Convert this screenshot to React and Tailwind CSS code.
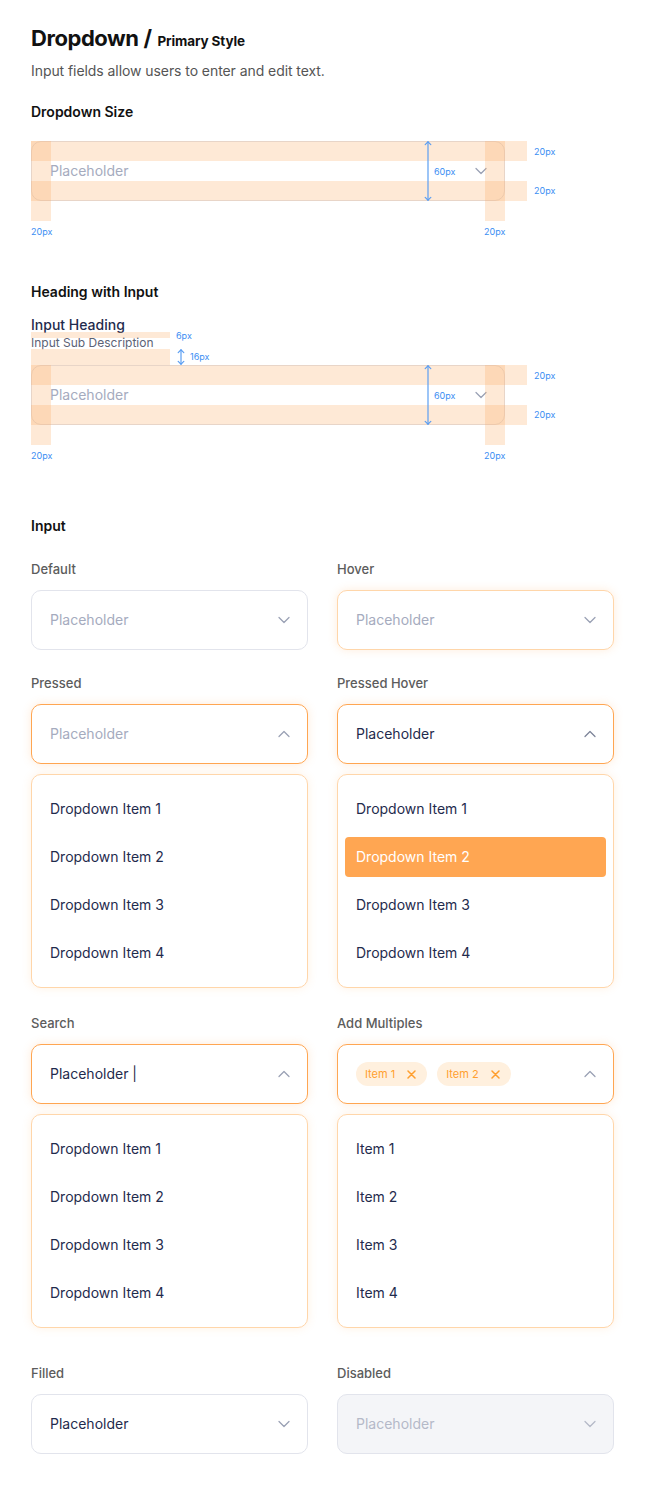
import React from 'react';
import { ChevronDown, ChevronUp } from 'lucide-react';

const items = ['Dropdown Item 1', 'Dropdown Item 2', 'Dropdown Item 3', 'Dropdown Item 4'];

function Arrow({ h }) {
  return (
    <svg width="8" height={h} viewBox={`0 0 8 ${h}`} fill="none" stroke="#5b9ef2" strokeWidth="1.2" strokeLinecap="round">
      <path d={`M4 0.8V${h - 0.8}`} />
      <path d="M1.2 3.6L4 0.8L6.8 3.6" />
      <path d={`M1.2 ${h - 3.6}L4 ${h - 0.8}L6.8 ${h - 3.6}`} />
    </svg>
  );
}

function SizeSpec() {
  return (
    <div className="relative h-[96px] w-[540px]">
      <div className="flex h-[60px] w-[474px] items-center justify-between rounded-[10px] border border-[#e2e4ec] bg-white pl-[18px] pr-[13px]">
        <span className="text-sm text-[#a5abbe]">Placeholder</span>
        <ChevronDown size={20} strokeWidth={1.5} className="text-[#9aa1b5]" />
      </div>
      {/* padding guides */}
      <div className="absolute left-0 top-0 h-5 w-[496px] bg-[#fda65d]/25" />
      <div className="absolute left-0 top-10 h-5 w-[496px] bg-[#fda65d]/25" />
      <div className="absolute left-0 top-0 h-20 w-5 bg-[#fda65d]/25" />
      <div className="absolute left-[454px] top-0 h-20 w-5 bg-[#fda65d]/25" />
      <div className="absolute left-[393px] top-0">
        <Arrow h={60} />
      </div>
      <span className="absolute left-[403px] top-[25px] text-[9px] leading-[11px] text-[#3b8ef3]">60px</span>
      <span className="absolute left-[503px] top-[5px] text-[9px] leading-[11px] text-[#3b8ef3]">20px</span>
      <span className="absolute left-[503px] top-[44px] text-[9px] leading-[11px] text-[#3b8ef3]">20px</span>
      <span className="absolute left-0 top-[85px] text-[9px] leading-[11px] text-[#3b8ef3]">20px</span>
      <span className="absolute left-[453px] top-[85px] text-[9px] leading-[11px] text-[#3b8ef3]">20px</span>
    </div>
  );
}

function Label({ children }) {
  return <div className="text-[13px] font-medium leading-4 text-[#5c5c5c]">{children}</div>;
}

function Menu({ list, active }) {
  return (
    <div className="mt-[10px] rounded-[10px] border border-[#ffd6aa] bg-white px-[7px] py-[10px] shadow-[0_0_10px_rgba(255,165,82,0.16)]">
      {list.map((item, i) => (
        <div key={item} className="flex h-12 items-center">
          <div
            className={`flex h-10 w-full items-center rounded-[4px] px-[11px] text-sm ${
              i === active ? 'bg-[#ffa652] text-white' : 'text-[#1f2b4d]'
            }`}
          >
            {item}
          </div>
        </div>
      ))}
    </div>
  );
}

function Chip({ children }) {
  return (
    <span className="flex h-6 items-center gap-3 rounded-full bg-[#fff0de] pl-[9px] pr-[11px] text-[11px] text-[#ff9f2e]">
      {children}
      <svg width="9" height="9" viewBox="0 0 9 9" fill="none" stroke="#ff9f2e" strokeWidth="1.5" strokeLinecap="round">
        <path d="M1 1L8 8M8 1L1 8" />
      </svg>
    </span>
  );
}

export default function App() {
  return (
    <div className="min-h-[1504px] bg-white pb-[50px] pl-[31px] pr-[31px] pt-[22px] font-['Inter',sans-serif] text-[#111]">
      <div className="flex items-baseline gap-[6px]">
        <h1 className="text-[22px] font-bold leading-8 tracking-[-0.02em]">Dropdown /</h1>
        <span className="text-[13.5px] font-bold tracking-[-0.01em]">Primary Style</span>
      </div>
      <p className="mt-[7px] text-sm leading-5 tracking-[-0.005em] text-[#555]">Input fields allow users to enter and edit text.</p>

      <h2 className="mt-[21px] text-sm font-semibold leading-5">Dropdown Size</h2>
      <div className="mt-[19px]">
        <SizeSpec />
      </div>

      <h2 className="mt-[45px] text-sm font-semibold leading-5">Heading with Input</h2>
      <div className="relative mt-[15px]">
        <div className="text-sm font-medium leading-4 text-[#1f2b4d]">Input Heading</div>
        <div className="mt-[2px] text-xs leading-[15px] text-[#5c6275]">Input Sub Description</div>
        <div className="absolute left-0 top-[15px] h-[6px] w-[139px] bg-[#fda65d]/25" />
        <div className="absolute left-0 top-[32px] h-4 w-[139px] bg-[#fda65d]/25" />
        <span className="absolute left-[145px] top-[13px] text-[9px] leading-[11px] text-[#3b8ef3]">6px</span>
        <div className="absolute left-[146px] top-[32px]">
          <Arrow h={16} />
        </div>
        <span className="absolute left-[159px] top-[34px] text-[9px] leading-[11px] text-[#3b8ef3]">16px</span>
        <div className="mt-[15px]">
          <SizeSpec />
        </div>
      </div>

      <h2 className="mt-[55px] text-sm font-semibold leading-5">Input</h2>

      <div className="mt-[25px] grid grid-cols-2 gap-x-[29px]">
        <div>
          <Label>Default</Label>
          <div className="mt-[13px] flex h-[60px] items-center justify-between rounded-[10px] border border-[#e2e4ec] bg-white pl-[18px] pr-[13px]">
            <span className="text-sm text-[#a5abbe]">Placeholder</span>
            <ChevronDown size={20} strokeWidth={1.5} className="text-[#9aa1b5]" />
          </div>
        </div>
        <div>
          <Label>Hover</Label>
          <div className="mt-[13px] flex h-[60px] items-center justify-between rounded-[10px] border border-[#ffd6aa] bg-white pl-[18px] pr-[13px] shadow-[0_0_10px_rgba(255,165,82,0.2)]">
            <span className="text-sm text-[#a5abbe]">Placeholder</span>
            <ChevronDown size={20} strokeWidth={1.5} className="text-[#9aa1b5]" />
          </div>
        </div>
      </div>

      <div className="mt-[25px] grid grid-cols-2 gap-x-[29px]">
        <div>
          <Label>Pressed</Label>
          <div className="mt-[13px] flex h-[60px] items-center justify-between rounded-[10px] border border-[#ffa652] bg-white pl-[18px] pr-[13px] shadow-[0_0_10px_rgba(255,165,82,0.22)]">
            <span className="text-sm text-[#a5abbe]">Placeholder</span>
            <ChevronUp size={20} strokeWidth={1.5} className="text-[#9aa1b5]" />
          </div>
          <Menu list={items} active={-1} />
        </div>
        <div>
          <Label>Pressed Hover</Label>
          <div className="mt-[13px] flex h-[60px] items-center justify-between rounded-[10px] border border-[#ffa652] bg-white pl-[18px] pr-[13px] shadow-[0_0_10px_rgba(255,165,82,0.22)]">
            <span className="text-sm text-[#1f2b4d]">Placeholder</span>
            <ChevronUp size={20} strokeWidth={1.5} className="text-[#7d8499]" />
          </div>
          <Menu list={items} active={1} />
        </div>
      </div>

      <div className="mt-[27px] grid grid-cols-2 gap-x-[29px]">
        <div>
          <Label>Search</Label>
          <div className="mt-[13px] flex h-[60px] items-center justify-between rounded-[10px] border border-[#ffa652] bg-white pl-[18px] pr-[13px] shadow-[0_0_10px_rgba(255,165,82,0.22)]">
            <span className="text-sm text-[#1f2b4d]">Placeholder |</span>
            <ChevronUp size={20} strokeWidth={1.5} className="text-[#9aa1b5]" />
          </div>
          <Menu list={items} active={-1} />
        </div>
        <div>
          <Label>Add Multiples</Label>
          <div className="mt-[13px] flex h-[60px] items-center justify-between rounded-[10px] border border-[#ffa652] bg-white pl-[18px] pr-[13px] shadow-[0_0_10px_rgba(255,165,82,0.22)]">
            <div className="flex items-center gap-[10px]">
              <Chip>Item 1</Chip>
              <Chip>Item 2</Chip>
            </div>
            <ChevronUp size={20} strokeWidth={1.5} className="text-[#9aa1b5]" />
          </div>
          <Menu list={['Item 1', 'Item 2', 'Item 3', 'Item 4']} active={-1} />
        </div>
      </div>

      <div className="mt-[37px] grid grid-cols-2 gap-x-[29px]">
        <div>
          <Label>Filled</Label>
          <div className="mt-[13px] flex h-[60px] items-center justify-between rounded-[10px] border border-[#e2e4ec] bg-white pl-[18px] pr-[13px]">
            <span className="text-sm text-[#1f2b4d]">Placeholder</span>
            <ChevronDown size={20} strokeWidth={1.5} className="text-[#9aa1b5]" />
          </div>
        </div>
        <div>
          <Label>Disabled</Label>
          <div className="mt-[13px] flex h-[60px] items-center justify-between rounded-[10px] border border-[#e2e4ec] bg-[#f4f5f8] pl-[18px] pr-[13px]">
            <span className="text-sm text-[#b4b9c8]">Placeholder</span>
            <ChevronDown size={20} strokeWidth={1.5} className="text-[#b4b9c8]" />
          </div>
        </div>
      </div>
    </div>
  );
}
